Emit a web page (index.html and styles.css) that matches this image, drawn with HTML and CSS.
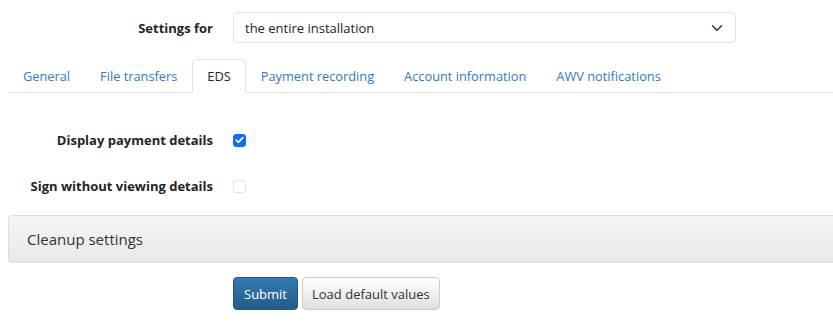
FILE: index.html
```html
<!DOCTYPE html>
<html lang="en">
<head>
<meta charset="utf-8">
<title>Settings</title>
<link rel="stylesheet" href="styles.css">
</head>
<body>
<form class="settings">
  <div class="row row-top">
    <label class="label" for="scope">Settings for</label>
    <div class="select">
      <span>the entire installation</span>
      <svg class="chev" width="12" height="8" viewBox="0 0 12 8"><path d="M1.5 1.8 L6 6.2 L10.5 1.8" fill="none" stroke="#343a40" stroke-width="1.6" stroke-linecap="round" stroke-linejoin="round"/></svg>
    </div>
  </div>

  <ul class="tabs">
    <li><a class="tab">General</a></li>
    <li><a class="tab">File transfers</a></li>
    <li><a class="tab active">EDS</a></li>
    <li><a class="tab">Payment recording</a></li>
    <li><a class="tab">Account information</a></li>
    <li><a class="tab">AWV notifications</a></li>
  </ul>

  <div class="row row-check first">
    <span class="label">Display payment details</span>
    <span class="check checked">
      <svg width="9" height="8" viewBox="0 0 9 8"><path d="M1.2 4.2 L3.5 6.3 L7.8 1.6" fill="none" stroke="#fff" stroke-width="1.7" stroke-linecap="round" stroke-linejoin="round"/></svg>
    </span>
  </div>
  <div class="row row-check">
    <span class="label">Sign without viewing details</span>
    <span class="check"></span>
  </div>

  <div class="panel">Cleanup settings</div>

  <div class="row row-buttons">
    <span class="label"></span>
    <div class="buttons">
      <button type="button" class="btn btn-primary">Submit</button>
      <button type="button" class="btn btn-default">Load default values</button>
    </div>
  </div>
</form>
</body>
</html>
```
FILE: styles.css
```css
html, body {
  margin: 0;
  padding: 0;
  overflow: hidden;
}
body {
  margin: 0 0 0 8px;
  font-family: "Open Sans", "Noto Sans", sans-serif;
  font-size: 13px;
  color: #212529;
  background: #fff;
}
.settings {
  display: flex;
  flex-direction: column;
}
.row {
  display: flex;
  align-items: center;
}
.label {
  flex: none;
  text-align: right;
  font-weight: 700;
  padding-right: 20px;
  box-sizing: border-box;
  width: 225px;
}
.row-top {
  margin-top: 12px;
  height: 31px;
}
.select {
  width: 503px;
  height: 31px;
  box-sizing: border-box;
  border: 1px solid #dee2e6;
  border-radius: 5px;
  display: flex;
  align-items: center;
  justify-content: space-between;
  padding: 0 12px 0 11px;
}
.chev { display: block; }

.tabs {
  list-style: none;
  margin: 16px -20px 0 0;
  padding: 0;
  display: flex;
  border-bottom: 1px solid #dee2e6;
  height: 33px;
  font-size: 12.8px;
}
.tabs li { display: flex; }
.tab {
  display: flex;
  align-items: center;
  padding: 0 14px;
  color: #2f7ac4;
  border: 1px solid transparent;
  border-top-left-radius: 5px;
  border-top-right-radius: 5px;
  margin-bottom: -1px;
  box-sizing: border-box;
  height: 34px;
  cursor: pointer;
}
.tab.active {
  color: #212529;
  border-color: #dee2e6 #dee2e6 #fff;
  background: #fff;
}

.row-check { height: 46px; }
.row-check.first { margin-top: 24px; }
.check {
  width: 13px;
  height: 13px;
  box-sizing: border-box;
  border: 1px solid #dee2e6;
  border-radius: 3px;
  display: flex;
  align-items: center;
  justify-content: center;
}
.check.checked {
  background: #0d6efd;
  border-color: #0d6efd;
}
.check svg { display: block; }

.panel {
  margin-top: 6px;
  margin-right: -20px;
  height: 48px;
  box-sizing: border-box;
  border: 1px solid #dcdcdc;
  border-radius: 4px;
  background: linear-gradient(to bottom, #f5f5f5, #e8e8e8);
  display: flex;
  align-items: center;
  padding-left: 18px;
  font-size: 15px;
  color: #333;
}

.row-buttons { margin-top: 14px; }
.buttons { display: flex; gap: 4px; }
.btn {
  font-family: inherit;
  font-size: 13px;
  height: 33px;
  border-radius: 4px;
  padding: 0 10px;
  cursor: pointer;
}
.btn-primary {
  color: #fff;
  background: linear-gradient(to bottom, #337ab7, #265a88);
  border: 1px solid #245580;
}
.btn-default {
  color: #333;
  background: linear-gradient(to bottom, #fff, #e0e0e0);
  border: 1px solid #ccc;
  padding: 0 9px;
}
```
